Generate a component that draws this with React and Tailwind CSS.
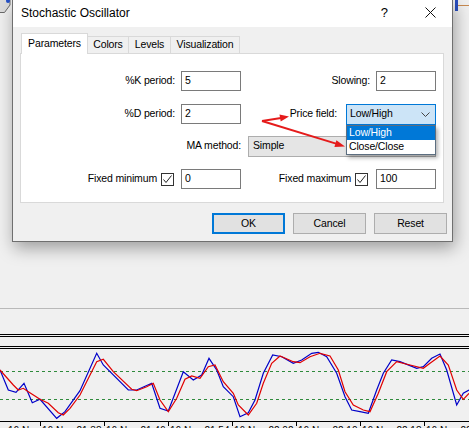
import React from 'react'

const blue = [[0,21],[8.3,41],[16,43.3],[24,34.3],[32.3,53.7],[40,50.3],[56.7,69.3],[65,62.7],[80,41.7],[96.7,4.3],[103.3,16],[128.3,41],[136.7,41],[151.7,34.3],[160,59.3],[168.3,62],[183.3,22.7],[193.3,31],[201.7,26],[209,9.3],[216.7,21],[223.3,37.7],[233.3,47.7],[240,67.7],[248.3,63.7],[255,51],[263.3,24.3],[272.7,6],[281.7,7.7],[293.3,14.3],[301.7,11],[311.7,4.3],[318.3,3.3],[326.7,7.7],[336.7,24.3],[345,47.7],[351.7,61],[360,62.7],[368.3,64.3],[376.7,41],[383.3,24.3],[391.7,11],[400,12.7],[416.7,19.3],[423.3,17.7],[431.7,9.3],[440,5],[446.7,21],[456.7,56],[463.3,44.3],[469,41]]

const red = [[0,21],[13.3,36],[18.3,41],[23.3,39.3],[28.3,42.7],[40,50.3],[48.3,54.3],[58.3,63.7],[63.3,66],[70,59.3],[80,46],[96.7,12.7],[103.3,10.3],[113.3,22.7],[131.7,40.3],[136.7,41.7],[146.7,37.7],[153.3,34.3],[160,51],[168.3,62.7],[176.7,49.3],[185,30.3],[191.7,27],[200,29.3],[208.3,17.7],[215,16],[223.3,32.7],[233.3,44.3],[238.3,56],[248.3,66],[256.7,54.3],[263.3,34.3],[271.7,14.3],[280,7],[293.3,12.7],[300,13.7],[310,7.7],[320,4.3],[330,7],[338.3,21],[345,42.7],[353.3,56],[363.3,61],[370,62.7],[378.3,44.3],[386.7,22.7],[396.7,12.7],[410,16],[423.3,19.3],[430,14.3],[440,7],[448.3,16],[456.7,41],[463.3,50.3],[469,44.3]]

const pts = (a) => a.map(([x, y]) => `${x},${y}`).join(' ')

const timeLabels = ['16 Nov 21:38', '16 Nov 21:46', '16 Nov 21:54', '16 Nov 22:02', '16 Nov 22:10', '16 Nov 22:18', '16 Nov 22:26']

function Chart() {
  return (
    <svg width="469" height="72" className="block">
      <line x1="0" y1="22.5" x2="469" y2="22.5" stroke="#2f8a3c" strokeDasharray="3 3" />
      <line x1="0" y1="50.5" x2="469" y2="50.5" stroke="#2f8a3c" strokeDasharray="3 3" />
      <polyline points={pts(blue)} fill="none" stroke="#0000c8" strokeWidth="1.2" />
      <polyline points={pts(red)} fill="none" stroke="#e00000" strokeWidth="1.2" />
    </svg>
  )
}

function Input({ value }) {
  return (
    <div className="w-[60px] h-[20px] border border-[#7a7a7a] bg-white pl-[3px] flex items-center shrink-0">
      {value}
    </div>
  )
}

function Check() {
  return (
    <div className="w-[13px] h-[13px] border border-[#333] bg-white flex items-center justify-center shrink-0">
      <svg width="11" height="11" viewBox="0 0 11 11">
        <path d="M1.5 5.5 L4 8.5 L9.5 1.5" fill="none" stroke="#222" strokeWidth="1" />
      </svg>
    </div>
  )
}

function Chevron() {
  return (
    <svg width="9" height="5" viewBox="0 0 9 5">
      <path d="M0.5 0.5 L4.5 4.5 L8.5 0.5" fill="none" stroke="#444" strokeWidth="1" />
    </svg>
  )
}

export default function App() {
  return (
    <div className="relative w-[469px] h-[428px] overflow-hidden bg-[#f0f0f0] font-['Liberation_Sans',Arial,sans-serif] text-black">
      {/* terminal behind the dialog */}
      <div className="flex flex-col">
        <div className="h-[308px]" />
        <div className="h-px bg-[#b9b9b9]" />
        <div className="h-[25px]" />
        <div className="h-px bg-black" />
        <div className="h-px" />
        <div className="h-px bg-black" />
        <div className="h-[9px]" />
        <div className="h-px bg-black" />
        <div className="h-px" />
        <div className="h-px bg-black" />
        <Chart />
        <div className="h-px bg-black" />
        <div className="h-[7px] flex overflow-hidden text-[10px] leading-[10px]">
          <div className="w-[40px] shrink-0 pl-[8px] pt-[4px] whitespace-nowrap overflow-hidden">16 Nov</div>
          {timeLabels.map((t) => (
            <div key={t} className="w-[64px] shrink-0 flex">
              <div className="w-px h-[4px] bg-black shrink-0" />
              <div className="ml-[1px] pt-[4px] whitespace-nowrap">{t}</div>
            </div>
          ))}
        </div>
      </div>

      {/* bits of the window behind */}
      <svg className="absolute left-0 top-0" width="14" height="16">
        <path d="M0 0 H10 V5 L4.5 12.5 H0 Z" fill="#dcdcdc" />
        <path d="M0 12.5 H4.5 L10 5 V0" fill="none" stroke="#6a6a6a" strokeWidth="1" />
        <circle cx="8" cy="1" r="2" fill="#2450c8" />
      </svg>
      <svg className="absolute right-0 top-0" width="16" height="14">
        <rect x="2" y="0" width="3" height="11" fill="#2a4fc0" />
        <line x1="5" y1="5.5" x2="16" y2="5.5" stroke="#c88a50" strokeWidth="1" />
      </svg>

      {/* dialog */}
      <div className="absolute left-[12px] top-0 w-[441px] h-[242px] border border-t-0 border-[#6f6f6f] bg-[#f0f0f0] shadow-[2px_6px_16px_rgba(0,0,0,0.35)] flex flex-col">
        <div className="h-[27px] bg-white flex items-center pl-[8px] pb-[2px] text-[12px] shrink-0">
          <span>Stochastic Oscillator</span>
          <span className="ml-auto text-[13px] mr-[37px]">?</span>
          <svg className="mr-[16px]" width="11" height="11" viewBox="0 0 11 11">
            <path d="M0.5 0.5 L10.5 10.5 M10.5 0.5 L0.5 10.5" stroke="#111" strokeWidth="1" />
          </svg>
        </div>

        <div className="text-[10.5px] tracking-[-0.15px] flex flex-col">
          {/* tabs */}
          <div className="mt-[6px] ml-[8px] h-[20px] flex items-end">
            <div className="relative z-10 -mb-px w-[67px] h-[21px] bg-white border border-b-0 border-[#d9d9d9] flex items-center justify-center">Parameters</div>
            <div className="-ml-px w-[42px] h-[17px] border border-b-0 border-[#d9d9d9] flex items-center justify-center">Colors</div>
            <div className="-ml-px w-[43px] h-[17px] border border-b-0 border-[#d9d9d9] flex items-center justify-center">Levels</div>
            <div className="-ml-px w-[70px] h-[17px] border border-b-0 border-[#d9d9d9] flex items-center justify-center">Visualization</div>
          </div>

          {/* panel */}
          <div className="ml-[7px] w-[424px] h-[150px] bg-white border border-[#d9d9d9] flex flex-col pt-[17px] pr-[7px]">
            <div className="h-[20px] flex items-center">
              <div className="w-[154px] text-right shrink-0">%K period:</div>
              <div className="ml-[6px]"><Input value="5" /></div>
              <div className="flex-1 text-right">Slowing:</div>
              <div className="ml-[6px]"><Input value="2" /></div>
            </div>

            <div className="mt-[13px] h-[20px] flex items-center">
              <div className="w-[154px] text-right shrink-0">%D period:</div>
              <div className="ml-[6px]"><Input value="2" /></div>
              <div className="flex-1 text-right">Price field:</div>
              <div className="relative ml-[9px] w-[90px] h-[21px] shrink-0">
                <div className="h-full border border-[#0078d7] bg-[#cce4f7] pl-[3px] pr-[5px] flex items-center justify-between">
                  <span>Low/High</span>
                  <Chevron />
                </div>
                <div className="absolute left-0 top-full w-[90px] z-20 border border-[#5c6e80] bg-white shadow-[2px_3px_4px_rgba(0,0,0,0.3)]">
                  <div className="h-[14px] bg-[#0078d7] text-white pl-[2px] flex items-center">Low/High</div>
                  <div className="h-[14px] pl-[2px] flex items-center">Close/Close</div>
                </div>
              </div>
            </div>

            <div className="mt-[12px] h-[20px] flex items-center">
              <div className="flex-1 text-right">MA method:</div>
              <div className="ml-[7px] w-[188px] h-[21px] border border-[#adadad] bg-[#e5e5e5] pl-[4px] pr-[6px] flex items-center justify-between shrink-0">
                <span>Simple</span>
                <Chevron />
              </div>
            </div>

            <div className="mt-[13px] h-[20px] flex items-center">
              <div className="w-[160px] pr-[7px] flex items-center justify-end gap-[4px] shrink-0">
                <span>Fixed minimum</span>
                <Check />
              </div>
              <Input value="0" />
              <div className="flex-1 pr-[8px] flex items-center justify-end gap-[4px]">
                <span>Fixed maximum</span>
                <Check />
              </div>
              <Input value="100" />
            </div>
          </div>

          {/* buttons */}
          <div className="mt-[10px] pr-[5px] flex justify-end gap-[8px]">
            <div className="w-[73px] h-[21px] border-2 border-[#0078d7] bg-[#e1e1e1] flex items-center justify-center">OK</div>
            <div className="w-[73px] h-[21px] border border-[#adadad] bg-[#e1e1e1] flex items-center justify-center">Cancel</div>
            <div className="w-[73px] h-[21px] border border-[#adadad] bg-[#e1e1e1] flex items-center justify-center">Reset</div>
          </div>
        </div>
      </div>

      {/* red annotation arrows */}
      <svg className="absolute left-0 top-0 pointer-events-none z-30" width="469" height="428">
        <line x1="262" y1="121" x2="281" y2="118" stroke="#e51b1b" strokeWidth="2" />
        <polygon points="289,116.5 280.7,121.5 279.5,114.6" fill="#e51b1b" />
        <line x1="262" y1="121" x2="336" y2="143.6" stroke="#e51b1b" strokeWidth="2" />
        <polygon points="345,146.5 334.4,146.9 336.4,140.2" fill="#e51b1b" />
      </svg>
    </div>
  )
}
